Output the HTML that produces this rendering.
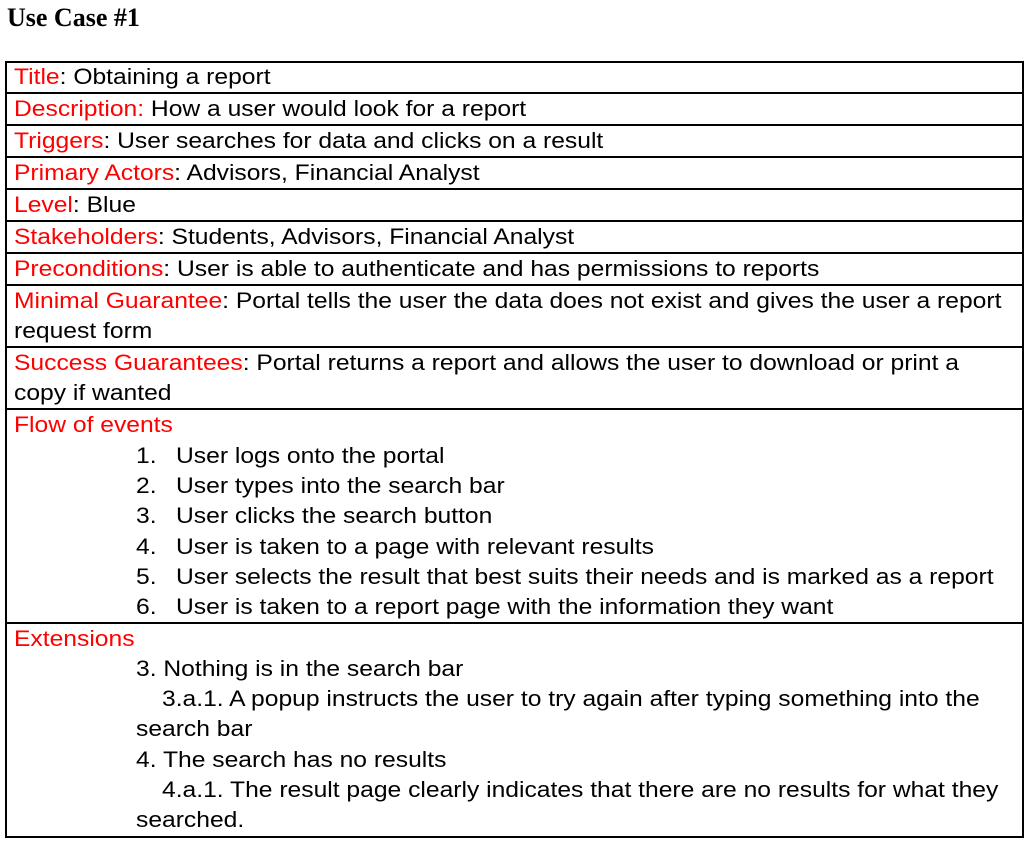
<!DOCTYPE html><html><head><style>
body{margin:0;width:1029px;height:843px;background:#fff;position:relative;overflow:hidden;font-family:"Liberation Sans",Arial,sans-serif;font-size:22.5px;color:#000}
.t{position:absolute;white-space:nowrap;line-height:30px;transform:scaleX(1.095);transform-origin:0 0}
.r{color:#f00}
.h{position:absolute;left:5px;width:1019px;height:2px;background:#000}
.v{position:absolute;top:61px;height:777px;width:2px;background:#000}
h1{position:absolute;left:7px;top:3px;margin:0;font:bold 26px "Liberation Serif",serif}
</style></head><body>
<h1>Use Case #1</h1>
<div class="v" style="left:5px"></div><div class="v" style="left:1022px"></div>
<div class="h" style="top:61px"></div><div class="h" style="top:92px"></div><div class="h" style="top:124px"></div><div class="h" style="top:156px"></div><div class="h" style="top:188px"></div><div class="h" style="top:220px"></div><div class="h" style="top:252px"></div><div class="h" style="top:284px"></div><div class="h" style="top:346px"></div><div class="h" style="top:408px"></div><div class="h" style="top:622px"></div><div class="h" style="top:836px"></div>
<div class="t" style="left:14px;top:62px"><span class="r">Title</span>: Obtaining a report</div>
<div class="t" style="left:14px;top:94px"><span class="r">Description:</span> How a user would look for a report</div>
<div class="t" style="left:14px;top:126px"><span class="r">Triggers</span>: User searches for data and clicks on a result</div>
<div class="t" style="left:14px;top:158px"><span class="r">Primary Actors</span>: Advisors, Financial Analyst</div>
<div class="t" style="left:14px;top:190px"><span class="r">Level</span>: Blue</div>
<div class="t" style="left:14px;top:222px"><span class="r">Stakeholders</span>: Students, Advisors, Financial Analyst</div>
<div class="t" style="left:14px;top:254px"><span class="r">Preconditions</span>: User is able to authenticate and has permissions to reports</div>
<div class="t" style="left:14px;top:286px"><span class="r">Minimal Guarantee</span>: Portal tells the user the data does not exist and gives the user a report</div>
<div class="t" style="left:14px;top:316px">request form</div>
<div class="t" style="left:14px;top:348px"><span class="r">Success Guarantees</span>: Portal returns a report and allows the user to download or print a</div>
<div class="t" style="left:14px;top:378px">copy if wanted</div>
<div class="t r" style="left:14px;top:410px">Flow of events</div>
<div class="t" style="left:136px;top:441px">1.</div><div class="t" style="left:176px;top:441px">User logs onto the portal</div>
<div class="t" style="left:136px;top:471px">2.</div><div class="t" style="left:176px;top:471px">User types into the search bar</div>
<div class="t" style="left:136px;top:501px">3.</div><div class="t" style="left:176px;top:501px">User clicks the search button</div>
<div class="t" style="left:136px;top:532px">4.</div><div class="t" style="left:176px;top:532px">User is taken to a page with relevant results</div>
<div class="t" style="left:136px;top:562px">5.</div><div class="t" style="left:176px;top:562px">User selects the result that best suits their needs and is marked as a report</div>
<div class="t" style="left:136px;top:592px">6.</div><div class="t" style="left:176px;top:592px">User is taken to a report page with the information they want</div>
<div class="t r" style="left:14px;top:624px">Extensions</div>
<div class="t" style="left:136px;top:654px">3. Nothing is in the search bar</div>
<div class="t" style="left:162px;top:684px">3.a.1. A popup instructs the user to try again after typing something into the</div>
<div class="t" style="left:136px;top:714px">search bar</div>
<div class="t" style="left:136px;top:745px">4. The search has no results</div>
<div class="t" style="left:162px;top:775px">4.a.1. The result page clearly indicates that there are no results for what they</div>
<div class="t" style="left:136px;top:805px">searched.</div>
</body></html>
